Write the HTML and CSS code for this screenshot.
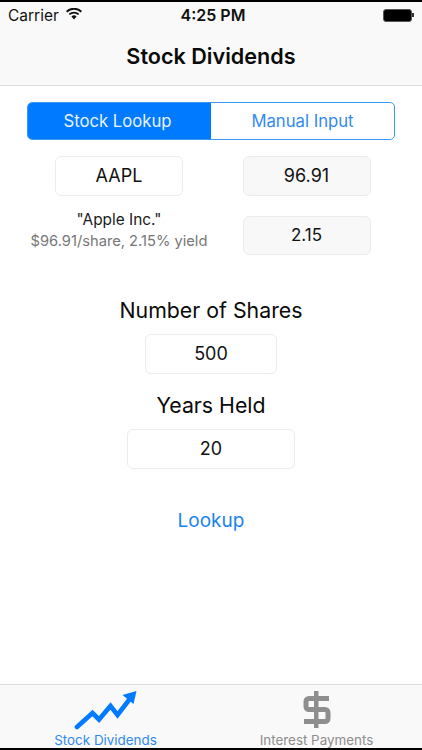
FILE: index.html
```html
<!DOCTYPE html>
<html lang="en">
<head>
<meta charset="utf-8">
<title>Stock Dividends</title>
<link rel="stylesheet" href="styles.css">
</head>
<body>
<div class="app">
  <header class="navbar">
    <div class="status">
      <div class="status-left">
        <span class="carrier">Carrier</span>
        <svg class="wifi" width="16" height="12" viewBox="0 0 16 12"><path d="M8 11.500 5.400 8.600a3.700 3.700 0 0 1 5.200 0zM3.900 7.100 2.700 5.800a7.600 7.600 0 0 1 10.600 0l-1.200 1.300a5.800 5.800 0 0 0-8.200 0zM1.300 4.400 0 3a11.500 11.500 0 0 1 16 0l-1.300 1.400a9.600 9.600 0 0 0-13.400 0z" fill="#111"/></svg>
      </div>
      <span class="time">4:25 PM</span>
      <div class="status-right">
        <span class="battery"></span><span class="battery-tip"></span>
      </div>
    </div>
    <h1 class="title">Stock Dividends</h1>
  </header>
  <main class="content">
    <div class="segmented">
      <div class="segment segment-active">Stock Lookup</div>
      <div class="segment">Manual Input</div>
    </div>
    <div class="grid">
      <div class="cell-left"><div class="field field-ticker">AAPL</div></div>
      <div class="cell-right"><div class="field field-ro">96.91</div></div>
      <div class="cell-left info">
        <div class="company">"Apple Inc."</div>
        <div class="quote">$96.91/share, 2.15% yield</div>
      </div>
      <div class="cell-right cell-top"><div class="field field-ro field-small">2.15</div></div>
    </div>
    <div class="label label-shares">Number of Shares</div>
    <div class="field field-shares">500</div>
    <div class="label label-years">Years Held</div>
    <div class="field field-years">20</div>
    <div class="lookup">Lookup</div>
  </main>
  <nav class="tabbar">
    <div class="tab tab-active">
      <svg class="tab-icon" width="64" height="40" viewBox="0 0 64 40"><path d="M3 36 18.500 22 25 28.500 36.500 15 43.500 24 55 9" fill="none" stroke="#007aff" stroke-width="4.600" stroke-linecap="round"/><path d="M62.500 0 59.500 13 48.500 4z" fill="#007aff"/></svg>
      <span>Stock Dividends</span>
    </div>
    <div class="tab">
      <svg class="tab-icon" width="64" height="40" viewBox="0 0 64 40"><path d="M44 7.500H24a3 3 0 0 0-3 3v5a3 3 0 0 0 3 3h16a3 3 0 0 1 3 3v6a3 3 0 0 1-3 3H19" fill="none" stroke="#8e8e8e" stroke-width="5"/><path d="M29 0h4.500v37H29z" fill="#8e8e8e"/></svg>
      <span>Interest Payments</span>
    </div>
  </nav>
</div>
</body>
</html>
```

FILE: styles.css
```css
* { box-sizing: border-box; }
html, body { margin: 0; padding: 0; }
body { background: #000; font-family: Inter, "Liberation Sans", sans-serif; }
.app {
  width: 422px;
  height: 750px;
  display: flex;
  flex-direction: column;
  padding: 2px 0;
  background: #000;
  overflow: hidden;
}
.navbar {
  height: 84px;
  background: #f9f9f9;
  border-bottom: 1px solid #dcdcdc;
  flex: none;
}
.status {
  height: 26px;
  padding: 0 8px;
  display: grid;
  grid-template-columns: 1fr auto 1fr;
  align-items: center;
  color: #111;
}
.status-left { display: flex; align-items: center; gap: 7px; }
.carrier { font-size: 15.500px; }
.wifi { margin-top: -3px; }
.time { margin-left: 4px; font-size: 16px; font-weight: 600; }
.status-right { display: flex; justify-content: flex-end; align-items: center; }
.battery { width: 29px; height: 13px; background: #000; border: 1px solid #555; border-radius: 3px; }
.battery-tip { width: 2px; height: 4px; background: #333; }
.title {
  margin: 14px 0 0;
  text-align: center;
  font-size: 21.600px;
  line-height: 28px;
  font-weight: 600;
  color: #0a0a0a;
}
.content {
  flex: 1;
  background: #fff;
  padding: 16px 27px 0;
  display: flex;
  flex-direction: column;
  align-items: center;
}
.segmented {
  width: 368px;
  height: 38px;
  flex: none;
  display: flex;
  border: 1px solid #3d97f5;
  border-radius: 5px;
  overflow: hidden;
}
.segment {
  flex: 1;
  display: flex;
  align-items: center;
  justify-content: center;
  font-size: 16.700px;
  color: #2f8af0;
}
.segment-active { flex: 0 0 183px; padding-right: 4px; background: #007aff; color: #e8f3ff; }
.grid {
  width: 368px;
  margin-top: 16px;
  display: grid;
  grid-template-columns: 184px 184px;
  grid-auto-rows: 40px;
  row-gap: 20px;
}
.cell-left, .cell-right { display: flex; flex-direction: column; align-items: center; justify-content: center; }
.cell-right { align-items: flex-start; padding-left: 31.500px; }
.cell-top { justify-content: flex-start; }
.field {
  height: 40px;
  flex: none;
  display: flex;
  align-items: center;
  justify-content: center;
  padding-bottom: 2px;
  border: 1px solid #ececec;
  border-radius: 6px;
  background: #fff;
  font-size: 18px;
  color: #111;
}
.field-ticker { width: 128px; }
.field-ro { width: 128px; background: #f8f8f8; }
.field-small { font-size: 17px; height: 39px; }
.info { text-align: center; padding-bottom: 11px; }
.company { font-size: 15.400px; line-height: 20px; color: #1a1a1a; }
.quote { margin-top: 1px; font-size: 14.700px; line-height: 20px; color: #777; white-space: nowrap; }
.label { font-size: 21.300px; line-height: 28px; color: #0a0a0a; text-align: center; }
.label-shares { margin-top: 40px; }
.label-years { margin-top: 17px; }
.field-shares { width: 132px; margin-top: 10px; }
.field-years { width: 168px; margin-top: 10px; }
.lookup { margin-top: 39px; font-size: 19px; line-height: 26px; color: #1b84ea; }
.tabbar {
  height: 64px;
  flex: none;
  background: #f9f9f9;
  border-top: 1px solid #dcdcdc;
  display: grid;
  grid-template-columns: 211px 211px;
}
.tab {
  display: flex;
  flex-direction: column;
  align-items: center;
  font-size: 13.400px;
  line-height: 16px;
  color: #8e8e8e;
}
.tab-active { color: #2f8af0; }
.tab-icon { display: block; flex: none; margin-top: 6px; margin-bottom: 1px; }
```
